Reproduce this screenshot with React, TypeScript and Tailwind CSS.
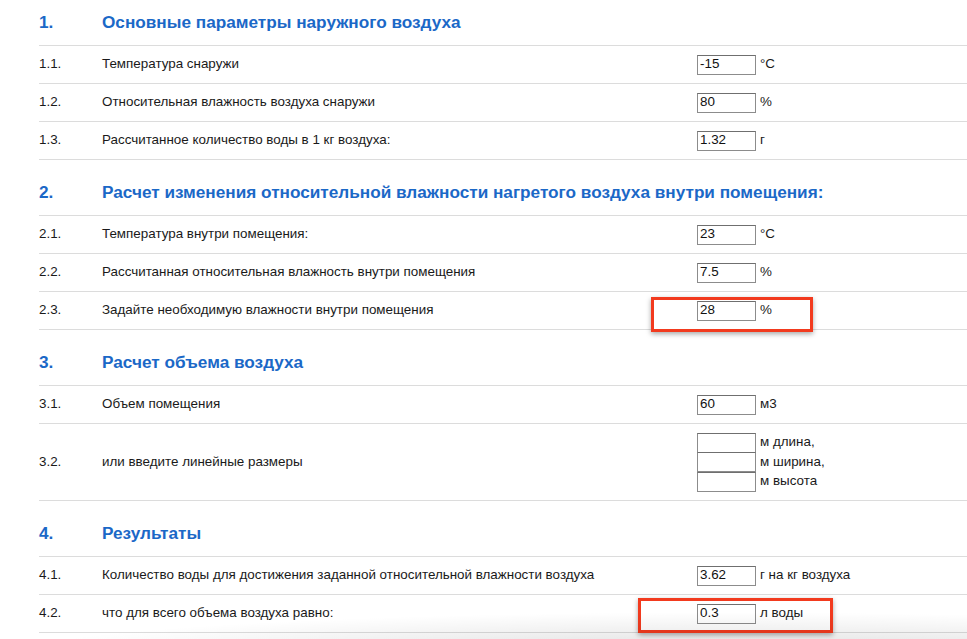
import React from "react";

type Row = {
  n: string;
  label: string;
  inputs: { value: string; unit: string }[];
  highlight?: "a" | "b";
};

type Section = { n: string; title: string; first?: boolean; rows: Row[] };

const sections: Section[] = [
  {
    n: "1.",
    title: "Основные параметры наружного воздуха",
    first: true,
    rows: [
      { n: "1.1.", label: "Температура снаружи", inputs: [{ value: "-15", unit: "°C" }] },
      { n: "1.2.", label: "Относительная влажность воздуха снаружи", inputs: [{ value: "80", unit: "%" }] },
      { n: "1.3.", label: "Рассчитанное количество воды в 1 кг воздуха:", inputs: [{ value: "1.32", unit: "г" }] },
    ],
  },
  {
    n: "2.",
    title: "Расчет изменения относительной влажности нагретого воздуха внутри помещения:",
    rows: [
      { n: "2.1.", label: "Температура внутри помещения:", inputs: [{ value: "23", unit: "°C" }] },
      { n: "2.2.", label: "Рассчитанная относительная влажность внутри помещения", inputs: [{ value: "7.5", unit: "%" }] },
      { n: "2.3.", label: "Задайте необходимую влажности внутри помещения", inputs: [{ value: "28", unit: "%" }], highlight: "a" },
    ],
  },
  {
    n: "3.",
    title: "Расчет объема воздуха",
    rows: [
      { n: "3.1.", label: "Объем помещения", inputs: [{ value: "60", unit: "м3" }] },
      {
        n: "3.2.",
        label: "или введите линейные размеры",
        inputs: [
          { value: "", unit: "м длина," },
          { value: "", unit: "м ширина," },
          { value: "", unit: "м высота" },
        ],
      },
    ],
  },
  {
    n: "4.",
    title: "Результаты",
    rows: [
      { n: "4.1.", label: "Количество воды для достижения заданной относительной влажности воздуха", inputs: [{ value: "3.62", unit: "г на кг воздуха" }] },
      { n: "4.2.", label: "что для всего объема воздуха равно:", inputs: [{ value: "0.3", unit: "л воды" }], highlight: "b" },
    ],
  },
];

function Field({ value, unit }: { value: string; unit: string }) {
  return (
    <div className="flex items-center h-[19.5px]">
      <input
        readOnly
        value={value}
        className="w-[59px] h-[20px] border border-[#8c8c8c] border-t-[#6f6f6f] bg-white px-[2px] text-[13.4px] text-[#111] outline-none font-['Liberation_Sans',Arial,sans-serif] rounded-none"
      />
      <span className="ml-[4px] text-[13.4px] text-[#1a1a1a]">{unit}</span>
    </div>
  );
}

export default function App() {
  return (
    <div className="relative w-[967px] h-[639px] overflow-hidden bg-white font-['Liberation_Sans',Arial,sans-serif] text-[#1a1a1a]">
      <div className="pl-[39px]">
        {sections.map((s) => (
          <div key={s.n}>
            <div
              className={`flex items-end border-b border-[#dcdcdc] pb-[13px] ${s.first ? "h-[46px]" : "h-[56px]"}`}
            >
              <span className="w-[63px] text-[17.2px] leading-[20px] font-bold text-[#1b68c7]">{s.n}</span>
              <span className="text-[17.2px] leading-[20px] font-bold text-[#1b68c7]">{s.title}</span>
            </div>
            {s.rows.map((r) => (
              <div
                key={r.n}
                className={`relative flex items-center border-b border-[#dcdcdc] ${r.inputs.length > 1 ? "h-[77px]" : "h-[38px]"}`}
              >
                <span className="w-[63px] text-[13.4px]">{r.n}</span>
                <span className="w-[595px] text-[13.4px]">{r.label}</span>
                <div className="flex flex-col">
                  {r.inputs.map((f, i) => (
                    <Field key={i} value={f.value} unit={f.unit} />
                  ))}
                </div>
                {r.highlight === "a" && (
                  <div className="absolute left-[612px] top-[5px] w-[162px] h-[35px] border-[3px] border-[#f23a1e] shadow-[0_2px_5px_rgba(0,0,0,0.35)]" />
                )}
                {r.highlight === "b" && (
                  <div className="absolute left-[599px] top-[3px] w-[195px] h-[35px] border-[3px] border-[#f23a1e] shadow-[0_2px_5px_rgba(0,0,0,0.35)]" />
                )}
              </div>
            ))}
          </div>
        ))}
      </div>
      <div className="pointer-events-none absolute left-0 right-0 bottom-0 h-[45px] bg-[radial-gradient(ellipse_75%_100%_at_75%_140%,rgba(0,0,0,0.14),rgba(0,0,0,0)_100%)]" />
    </div>
  );
}
